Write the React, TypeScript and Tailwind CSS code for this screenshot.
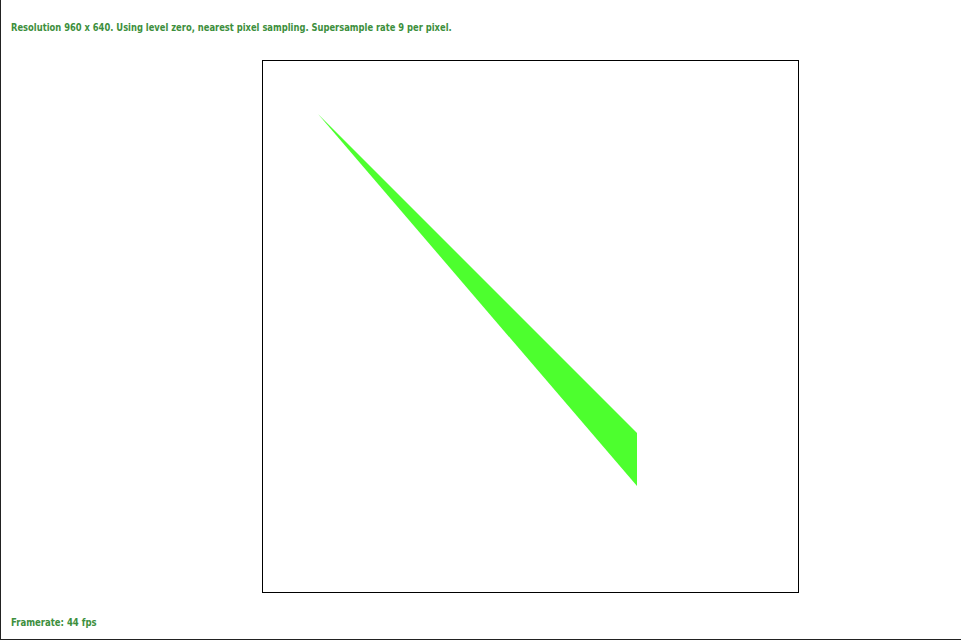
export default function App() {
  const font = { fontFamily: '"DejaVu Sans Condensed", "Liberation Sans", sans-serif' };
  return (
    <div className="w-[961px] h-[640px] bg-white border-l border-b border-[#222222] flex flex-col overflow-hidden">
      <div className="h-[60px] pl-[10px] pt-[21px]">
        <p className="text-[11px] leading-[14px] font-bold text-[#3d8f3d] whitespace-nowrap origin-left scale-x-[0.845]" style={font}>
          Resolution 960 x 640. Using level zero, nearest pixel sampling. Supersample rate 9 per pixel.
        </p>
      </div>
      <div className="ml-[261px] w-[537px] h-[533px] border border-black">
        <svg width="535" height="531" viewBox="0 0 535 531" className="block">
          <polygon points="55,53 374,372 374,425" fill="#4dff2e" />
        </svg>
      </div>
      <div className="pl-[10px] pt-[23px]">
        <p className="text-[11px] leading-[14px] font-bold text-[#3d8f3d] whitespace-nowrap origin-left scale-x-[0.86]" style={font}>
          Framerate: 44 fps
        </p>
      </div>
    </div>
  );
}
